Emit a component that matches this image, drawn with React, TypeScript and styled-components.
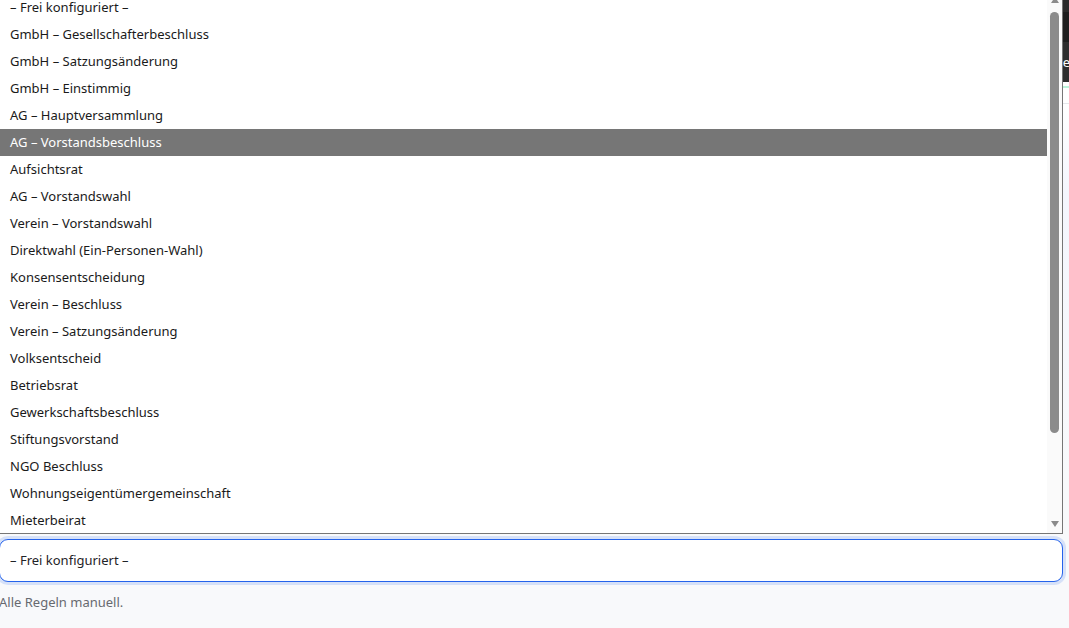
import React from "react";
import styled, { createGlobalStyle } from "styled-components";

const GlobalStyle = createGlobalStyle`
  html, body {
    margin: 0;
    padding: 0;
    background: #f8f9fb;
    overflow: hidden;
  }
  * { box-sizing: border-box; }
`;

const templates = [
  "– Frei konfiguriert –",
  "GmbH – Gesellschafterbeschluss",
  "GmbH – Satzungsänderung",
  "GmbH – Einstimmig",
  "AG – Hauptversammlung",
  "AG – Vorstandsbeschluss",
  "Aufsichtsrat",
  "AG – Vorstandswahl",
  "Verein – Vorstandswahl",
  "Direktwahl (Ein-Personen-Wahl)",
  "Konsensentscheidung",
  "Verein – Beschluss",
  "Verein – Satzungsänderung",
  "Volksentscheid",
  "Betriebsrat",
  "Gewerkschaftsbeschluss",
  "Stiftungsvorstand",
  "NGO Beschluss",
  "Wohnungseigentümergemeinschaft",
  "Mieterbeirat",
];

const Stage = styled.div`
  position: relative;
  width: 1069px;
  height: 628px;
  overflow: hidden;
  font-family: "Noto Sans", "Open Sans", sans-serif;
`;

/* Page underneath the open dropdown */
const Page = styled.div`
  display: flex;
  flex-direction: column;
  height: 100%;
`;

const TopStrip = styled.div`
  height: 12px;
  background: #2b2b2b;
`;

const NavBar = styled.div`
  height: 30px;
  background: #1e1e1e;
`;

const SubBar = styled.div`
  height: 40px;
  background: #2d2d2d;
  display: flex;
  align-items: center;
  justify-content: flex-end;
  color: #ffffff;
  font-size: 13px;
  overflow: hidden;
  white-space: nowrap;
`;

const SubBarLabel = styled.span`
  margin-right: -1px;
`;

const AccentGap = styled.div`
  height: 4px;
  background: #ffffff;
`;

const AccentLine = styled.div`
  height: 2px;
  background: #bdf3da;
`;

const Panel = styled.div`
  height: 16px;
  background: #ffffff;
  border-bottom: 1px solid #e5e7eb;
`;

const Content = styled.div`
  flex: 1;
  background: linear-gradient(180deg, #ffffff 0px, #f4f6fd 90px, #f8f9fb 380px);
  padding-top: 435px;
  margin-left: -1px;
`;

const Field = styled.div`
  width: 1064px;
  display: flex;
  flex-direction: column;
  gap: 10px;
`;

const SelectBox = styled.div`
  height: 43px;
  border: 1px solid #2563eb;
  border-radius: 9px;
  background: #ffffff;
  box-shadow: 0 0 0 3px rgba(37, 99, 235, 0.16);
  display: flex;
  align-items: center;
  padding: 0 0 2px 10px;
  font-size: 13px;
  color: #1f2328;
`;

const Hint = styled.div`
  font-size: 13px;
  color: #676a70;
  padding-top: 1px;
`;

/* Open native-style listbox popup */
const Listbox = styled.div`
  position: absolute;
  top: -7px;
  left: -1px;
  width: 1064px;
  height: 541px;
  background: #ffffff;
  border: 1px solid #767676;
  display: flex;
`;

const Options = styled.ul`
  list-style: none;
  margin: 0;
  padding: 0;
  flex: 1;
  overflow: hidden;
`;

const Option = styled.li<{ $active?: boolean }>`
  height: 27px;
  display: flex;
  align-items: center;
  padding: 0 0 2px 10px;
  font-size: 13px;
  color: ${(p) => (p.$active ? "#ffffff" : "#1a1a1a")};
  background: ${(p) => (p.$active ? "#767676" : "transparent")};
  white-space: nowrap;
`;

const ScrollTrack = styled.div`
  width: 15px;
  background: #fafafa;
  display: flex;
  flex-direction: column;
  align-items: center;
  padding: 3px 0 6px;
`;

const Arrow = styled.div<{ $down?: boolean }>`
  width: 0;
  height: 0;
  border-left: 4px solid transparent;
  border-right: 4px solid transparent;
  ${(p) =>
    p.$down
      ? "border-top: 6px solid #8b8b8b;"
      : "border-bottom: 6px solid #8b8b8b;"}
`;

const Thumb = styled.div`
  width: 9px;
  height: 421px;
  margin-top: 9px;
  background: #8b8b8b;
  border-radius: 5px;
`;

const TrackSpacer = styled.div`
  flex: 1;
`;

export default function App() {
  return (
    <Stage>
      <GlobalStyle />
      <Page>
        <TopStrip />
        <NavBar />
        <SubBar>
          <SubBarLabel>e</SubBarLabel>
        </SubBar>
        <AccentGap />
        <AccentLine />
        <Panel />
        <Content>
          <Field>
            <SelectBox>– Frei konfiguriert –</SelectBox>
            <Hint>Alle Regeln manuell.</Hint>
          </Field>
        </Content>
      </Page>
      <Listbox role="listbox">
        <Options>
          {templates.map((t, i) => (
            <Option key={t} $active={i === 5}>
              {t}
            </Option>
          ))}
        </Options>
        <ScrollTrack>
          <Arrow />
          <Thumb />
          <TrackSpacer />
          <Arrow $down />
        </ScrollTrack>
      </Listbox>
    </Stage>
  );
}
